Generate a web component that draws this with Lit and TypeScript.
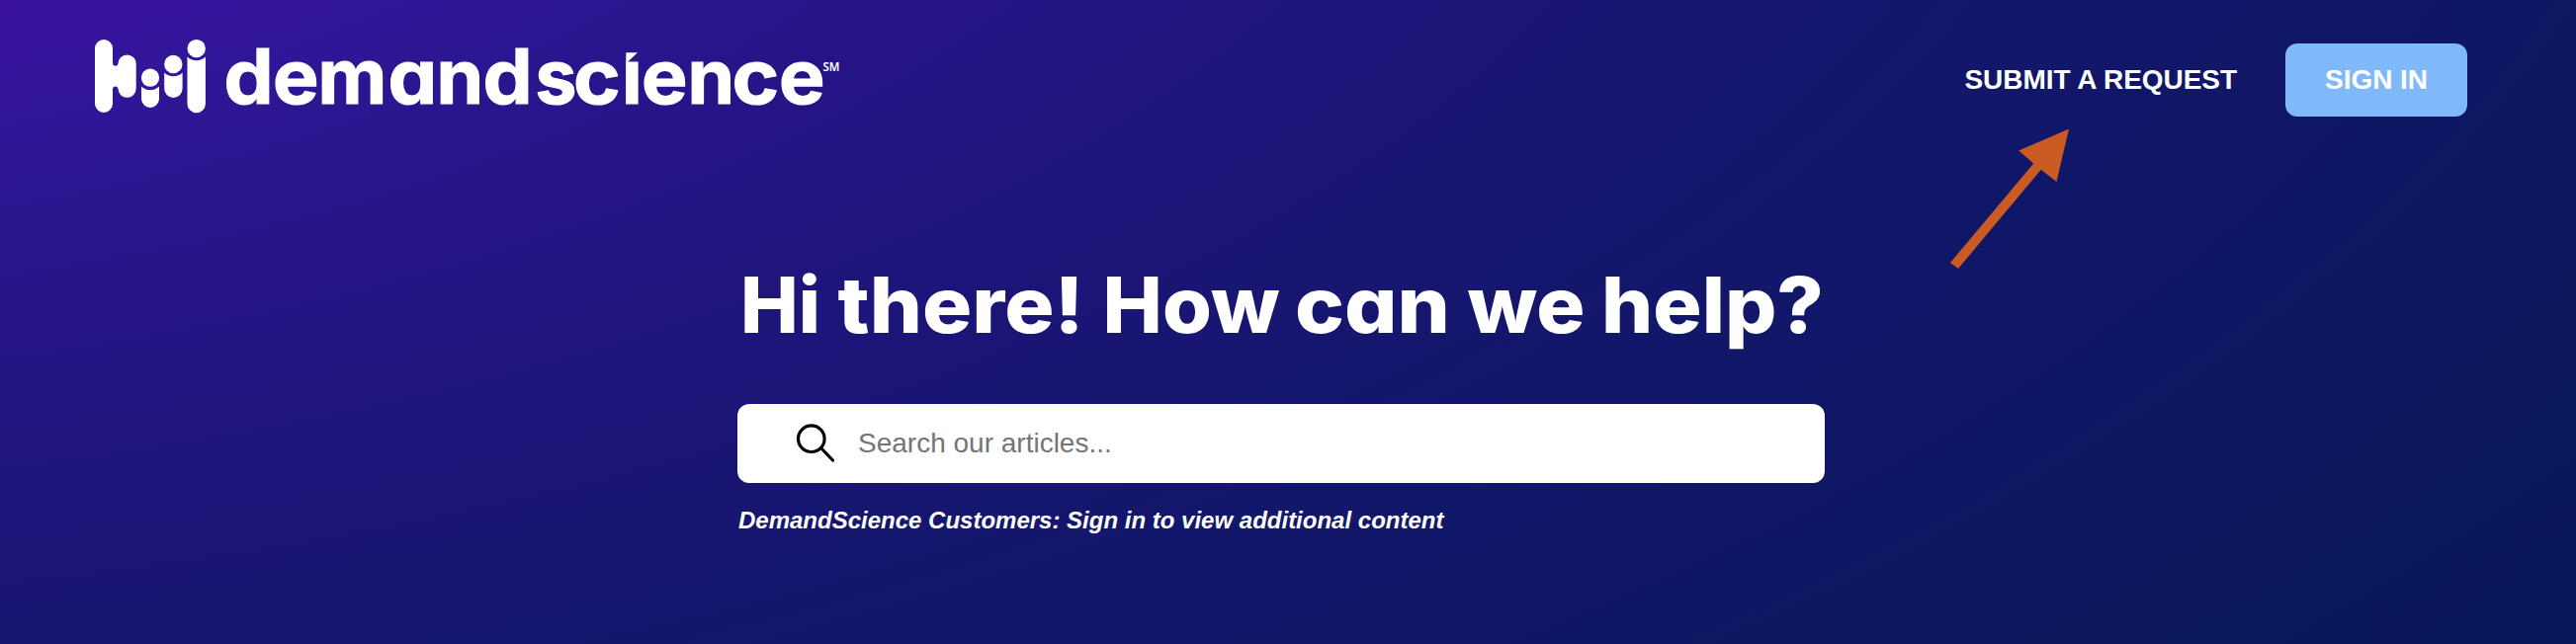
import { LitElement, html, svg, css } from "lit";
import { customElement } from "lit/decorators.js";

interface Glyph { text: string; x: number; stretch: number; }

const WORDMARK: Glyph[] = [
  { text: "d", x: 226.500, stretch: 1.04 },
  { text: "e", x: 276, stretch: 1.02 },
  { text: "m", x: 321.500, stretch: 1 },
  { text: "a", x: 392.500, stretch: 1.03 },
  { text: "n", x: 441.500, stretch: 1 },
  { text: "d", x: 488.500, stretch: 1.04 },
  { text: "s", x: 541.500, stretch: 0.98 },
  { text: "c", x: 580, stretch: 1.06 },
  { text: "ı", x: 629, stretch: 1 },
  { text: "e", x: 649, stretch: 1.02 },
  { text: "n", x: 695.500, stretch: 1 },
  { text: "c", x: 740.500, stretch: 1.06 },
  { text: "e", x: 788, stretch: 1.02 },
];

@customElement("brand-logo")
class BrandLogo extends LitElement {
  static styles = css`
    :host { display: block; width: 760px; height: 104px; }
    svg { display: block; fill: #fff; }
    .word { font: 700 76.500px Inter, sans-serif; font-feature-settings: "cv11" 1; stroke: #fff; stroke-width: 1.2; }
    .mark { font: 600 13px "Noto Sans", sans-serif; }
  `;
  render() {
    return html`<svg width="760" height="104" viewBox="95 20 760 104" role="img" aria-label="demandscience">
      <path d="M96 49a9 9 0 0 1 18 0V64.500a2.800 2.800 0 0 0 5.500 0a9 9 0 0 1 18.200 0V89.700a9 9 0 0 1 -18.200 0a2.800 2.800 0 0 0 -5.500 0V105a9 9 0 0 1 -18 0Z" />
      <circle cx="152" cy="78.700" r="9.100" />
      <path d="M143 87.500A13 13 0 0 0 161 87.500V100a9 9 0 0 1 -18 0Z" />
      <circle cx="175.300" cy="65" r="9.200" />
      <path d="M166.200 73.500A13 13 0 0 0 184.600 73.500V89.700a9.200 9.200 0 0 1 -18.400 0Z" />
      <circle cx="198.700" cy="49.100" r="9.200" />
      <path d="M189.500 57.500A13 13 0 0 0 207.900 57.500V105a9.200 9.200 0 0 1 -18.400 0Z" />
      ${WORDMARK.map((g) => svg`<text class="word" transform="translate(${g.x} 105) scale(${g.stretch} 1)">${g.text}</text>`)}
      <path d="M633.300 53.200H645L633.300 64.300Z" />
      <text class="mark" x="832.500" y="72.300" textLength="17" lengthAdjust="spacingAndGlyphs">SM</text>
    </svg>`;
  }
}

interface Word { text: string; x: number; width: number; }

const HEADING: Word[] = [
  { text: "Hi", x: 3, width: 81 },
  { text: "there!", x: 101.5, width: 249 },
  { text: "How", x: 369.5, width: 179 },
  { text: "can", x: 564, width: 157 },
  { text: "we", x: 738.5, width: 119 },
  { text: "help?", x: 874, width: 225 },
];

@customElement("app-root")
class AppRoot extends LitElement {
  static styles = css`
    :host {
      display: flex;
      flex-direction: column;
      position: relative;
      box-sizing: border-box;
      height: 652px;
      overflow: hidden;
      color: #fff;
      font-family: "Liberation Sans", Arial, sans-serif;
      background: radial-gradient(ellipse 3888px 1750px at -500px -400px,
        #39129e 26.2%, #311698 32.4%, #2a158e 38%, #251486 44%, #20157e 49%,
        #1c1578 56%, #16166f 63.5%, #121769 71%, #0f1766 79%, #0d1860 86%, #0a185c 93%, #081758 100%);
    }
    header { display: flex; justify-content: space-between; align-items: flex-start; padding: 20px 110px 0 95px; }
    nav { display: flex; align-items: center; gap: 49px; margin-top: 24px; font-weight: 700; font-size: 28px; letter-spacing: -0.05px; }
    .signin { box-sizing: border-box; width: 184px; height: 74px; border-radius: 12px; background: #7fb9f9; display: flex; align-items: center; justify-content: center; }
    main { width: 1100px; margin: 128px 0 0 746px; }
    h1 { margin: 0; height: 119px; font: 800 78px/119px Inter, sans-serif; font-feature-settings: "cv11" 1; }
    h1 svg { display: block; fill: #fff; }
    .search { height: 80px; margin-top: 38px; background: #fff; border-radius: 12px; display: flex; align-items: center; padding-left: 59px; gap: 23px; box-sizing: border-box; }
    .placeholder { font-size: 28px; color: #757575; }
    .note { margin: 24px 0 0 1px; font-size: 24px; line-height: 28px; font-style: italic; font-weight: 700; white-space: nowrap; }
    .arrow { position: absolute; left: 1970px; top: 128px; }
  `;
  render() {
    return html`
      <header>
        <brand-logo></brand-logo>
        <nav><span>SUBMIT A REQUEST</span><span class="signin">SIGN IN</span></nav>
      </header>
      <main>
        <h1>
          <svg width="1110" height="119" viewBox="0 0 1110 119">
            ${HEADING.map((w) => svg`<text x=${w.x} y="85.300" textLength=${w.width} lengthAdjust="spacingAndGlyphs">${w.text}</text>`)}
          </svg>
        </h1>
        <div class="search">
          <svg width="40" height="40" viewBox="805 428.500 40 40" fill="none" stroke="#000" stroke-width="3.200" stroke-linecap="round">
            <circle cx="820.800" cy="443.700" r="13.300" /><path d="M831 453.500L842.500 465.500" />
          </svg>
          <span class="placeholder">Search our articles...</span>
        </div>
        <p class="note">DemandScience Customers: Sign in to view additional content</p>
      </main>
      <svg class="arrow" width="126" height="148" viewBox="1970 128 126 148" fill="#c95b23">
        <path d="M2093 130.500L2042.200 152.500L2057.200 165.500L1973 266L1981 272L2064.800 171.700L2080.500 184Z" />
      </svg>`;
  }
}
